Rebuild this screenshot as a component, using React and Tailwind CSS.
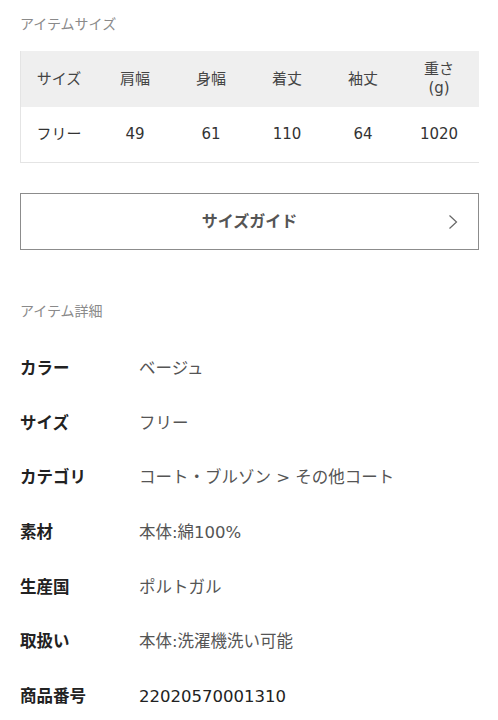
const headers = ['サイズ', '肩幅', '身幅', '着丈', '袖丈', '重さ\n(g)']
const values = ['フリー', '49', '61', '110', '64', '1020']

const details = [
  { label: 'カラー', value: 'ベージュ' },
  { label: 'サイズ', value: 'フリー' },
  { label: 'カテゴリ', value: 'コート・ブルゾン > その他コート' },
  { label: '素材', value: '本体:綿100%' },
  { label: '生産国', value: 'ポルトガル' },
  { label: '取扱い', value: '本体:洗濯機洗い可能' },
  { label: '商品番号', value: '22020570001310', dark: true },
]

export default function App() {
  return (
    <div className="w-[498px] h-[720px] overflow-hidden bg-white px-5 pt-[14px]"
      style={{ fontFamily: '"DejaVu Sans", "Noto Sans CJK JP", sans-serif' }}>
      <h2 className="text-[14px] leading-5 text-[#8a8a8a]">アイテムサイズ</h2>

      {/* サイズ表 */}
      <div className="mt-[17px] mr-[-1px] border-l border-b border-[#e4e4e4]">
        <div className="grid grid-cols-[76px_76px_76px_76px_76px_76px_1fr] h-[56px] bg-[#efefef] text-[15px] text-[#444]">
          {headers.map((h) => (
            <div key={h} className="flex items-center justify-center text-center whitespace-pre-line leading-[19px]">
              {h}
            </div>
          ))}
          <div />
        </div>
        <div className="grid grid-cols-[76px_76px_76px_76px_76px_76px_1fr] h-[55px] text-[15px] text-[#333]">
          {values.map((v) => (
            <div key={v} className="flex items-center justify-center">{v}</div>
          ))}
          <div />
        </div>
      </div>

      <button className="mt-[30px] w-[459px] h-[57px] border border-[#8c8c8c] flex items-center relative">
        <span className="flex-1 text-center text-[16px] font-bold text-[#555]">サイズガイド</span>
        <svg className="absolute right-[20px] top-1/2 -translate-y-1/2" width="10" height="16" viewBox="0 0 10 16" fill="none">
          <path d="M1.5 1.5 L8.5 8 L1.5 14.5" stroke="#666" strokeWidth="1.2" />
        </svg>
      </button>

      <h2 className="mt-[51px] text-[14px] leading-5 text-[#8a8a8a]">アイテム詳細</h2>

      <div className="mt-[21px] flex flex-col">
        {details.map((d) => (
          <div key={d.label} className="flex items-center h-[54.7px]">
            <div className="w-[119px] text-[16.5px] font-bold text-[#222]">{d.label}</div>
            <div className={`text-[16.5px] whitespace-pre ${d.dark ? 'text-[#222]' : 'text-[#555]'}`}>{d.value}</div>
          </div>
        ))}
      </div>
    </div>
  )
}
